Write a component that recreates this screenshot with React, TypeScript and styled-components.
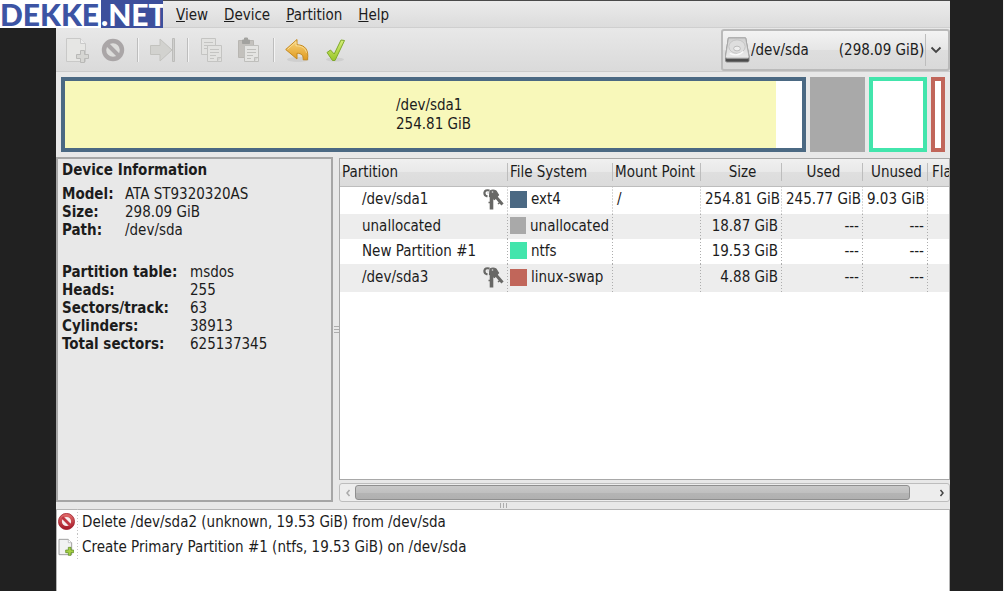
import React from "react";
import styled, { createGlobalStyle } from "styled-components";

const Global = createGlobalStyle`
  * { box-sizing: border-box; }
  html, body, #root { height: 100%; }
  body {
    margin: 0;
    background: #212121;
    color: #1c1c1c;
    font: 15px/18px "DejaVu Sans Condensed", "DejaVu Sans", sans-serif;
  }
  button, select { font: inherit; color: inherit; }
`;

const Page = styled.div`
  display: flex;
  flex-direction: column;
  min-height: 100%;
  border-right: 1px solid #f4f4f4;
`;

const Header = styled.header`
  display: flex;
  height: 28px;
  padding-right: 53px;
`;

const Logo = styled.a`
  display: flex;
  width: 163px;
  background: #fff;
  color: #3c54a4;
  font: 900 30px/28px Lato, sans-serif;
  text-decoration: none;
`;

const LogoName = styled.span`
  flex: 1;
`;

const LogoSuffix = styled.span`
  width: 62px;
  background: #3c4f9c;
  color: #fff;
`;

const MenuBar = styled.nav`
  flex: 1;
  display: flex;
  padding-left: 5px;
  border-top: 1px solid #4a4a4a;
  border-bottom: 1px solid #cfcfcf;
  background: linear-gradient(#ebebeb, #dcdcdc);
`;

const MenuButton = styled.button`
  border: 0;
  padding: 2px 8px 0;
  background: none;

  &::first-letter { text-decoration: underline; }
`;

const Main = styled.main`
  flex: 1;
  display: flex;
  flex-direction: column;
  margin: 0 53px 0 56px;
  background: #e8e8e8;
`;

const Toolbar = styled.div`
  display: flex;
  align-items: center;
  gap: 12px;
  height: 44px;
  padding-left: 9px;
  border-bottom: 1px solid #cbcbcb;
  background: linear-gradient(#e8e8e8, #dadada);
`;

const ToolButton = styled.button`
  width: 24px;
  height: 28px;
  padding: 0;
  border: 0;
  background: none;

  svg { display: block; overflow: visible; }
`;

const Separator = styled.span`
  width: 2px;
  height: 24px;
  border-left: 1px solid #bdbdbd;
  border-right: 1px solid #f4f4f4;
`;

const DevicePicker = styled.label`
  display: flex;
  align-items: center;
  width: 229px;
  height: 42px;
  margin-left: auto;
  padding-left: 2px;
  border: 2px solid #bababa;
  border-radius: 3px;
  background: linear-gradient(#f3f3f3, #e6e6e6 50%, #dedede 50%, #d9d9d9);
`;

const DeviceSelect = styled.select`
  flex: 1;
  min-width: 0;
  height: 32px;
  padding: 0 0 0 1px;
  border: 0;
  border-right: 1px solid #bdbdbd;
  background: none;
  appearance: none;
`;

const Chevron = styled.svg`
  width: 12px;
  height: 12px;
  margin: 0 6px 0 4px;
`;

const DiskMap = styled.section`
  display: flex;
  gap: 4px;
  height: 85px;
  padding: 5px;
`;

const Segment = styled.div<{ $share: number; $color: string; $solid?: boolean }>`
  position: relative;
  display: flex;
  align-items: center;
  justify-content: center;
  flex: ${(p) => p.$share} 1 0;
  border: 4px solid ${(p) => p.$color};
  background: ${(p) => (p.$solid ? p.$color : "#fff")};
`;

const UsedFill = styled.div`
  position: absolute;
  inset: 0 auto 0 0;
  background: #f8f8ba;
`;

const SegmentLabel = styled.div`
  position: relative;
  line-height: 19px;
`;

const Panes = styled.div`
  display: flex;
  height: 345px;
`;

const InfoPanel = styled.aside`
  width: 277px;
  padding: 2px 4px;
  border: 2px solid #a6a6a6;
`;

const InfoTitle = styled.h2`
  margin: 0 0 6px;
  font-size: 15px;
  line-height: 18px;
`;

const InfoList = styled.dl<{ $labels: number }>`
  display: grid;
  grid-template-columns: ${(p) => p.$labels}px 1fr;
  margin: 0 0 24px;

  dt { font-weight: bold; white-space: nowrap; }
  dd { margin: 0; }
`;

const Grip = styled.div<{ $vertical?: boolean }>`
  display: flex;
  flex-direction: ${(p) => (p.$vertical ? "column" : "row")};
  align-items: center;
  justify-content: center;
  gap: 2px;
  ${(p) => (p.$vertical ? "width: 6px;" : "height: 7px;")}

  i {
    width: ${(p) => (p.$vertical ? 5 : 1)}px;
    height: ${(p) => (p.$vertical ? 1 : 5)}px;
    background: #adadad;
  }
`;

const TablePane = styled.div`
  flex: 1;
  min-width: 0;
  display: flex;
  flex-direction: column;
  gap: 3px;
`;

const TableFrame = styled.div`
  flex: 1;
  margin-top: 1px;
  overflow: hidden;
  border: 1px solid #a8a8a8;
  background: #fff;
`;

const Table = styled.table`
  width: 100%;
  table-layout: fixed;
  border-collapse: collapse;
  white-space: nowrap;
`;

const HeadCell = styled.th<{ $align?: string }>`
  height: 27px;
  padding: 0 0 0 2px;
  font-weight: normal;
  text-align: ${(p) => p.$align || "left"};
  border-bottom: 1px solid #bdbdbd;
  background:
    linear-gradient(#bdbdbd, #bdbdbd) right / 1px 18px no-repeat,
    linear-gradient(#f0f0f0, #e8e8e8 50%, #dfdfdf 50%, #dbdbdb);

  &:last-child {
    padding-left: 4px;
    background: linear-gradient(#f0f0f0, #e8e8e8 50%, #dfdfdf 50%, #dbdbdb);
  }
`;

const Row = styled.tr<{ $tall: boolean }>`
  height: ${(p) => (p.$tall ? 28 : 25)}px;

  &:nth-child(even) { background: #ededed; }
`;

const Cell = styled.td<{ $right?: boolean }>`
  padding: 0 4px 2px;
  text-align: ${(p) => (p.$right ? "right" : "left")};
  background: linear-gradient(#adadad 1px, transparent 1px) right top / 1px 3px repeat-y;

  &:last-child { background: none; }
`;

const NameCell = styled.div`
  display: flex;
  align-items: center;
  justify-content: space-between;
  padding-left: 18px;
`;

const FsCell = styled.div`
  display: flex;
  align-items: center;
  gap: 4px;
  margin-left: -2px;
`;

const Swatch = styled.span<{ $color: string }>`
  width: 17px;
  height: 17px;
  background: ${(p) => p.$color};
`;

const ScrollBar = styled.div`
  display: flex;
  height: 19px;
  border: 1px solid #bdbdbd;
  border-radius: 3px;
  background: #ededed;
`;

const ScrollButton = styled.button`
  width: 15px;
  padding: 0;
  border: 0;
  background: none;

  svg { display: block; margin: 0 auto; }
`;

const Track = styled.div`
  flex: 1;
  margin-right: 7px;
`;

const Thumb = styled.div`
  width: 97%;
  height: 15px;
  margin-top: 1px;
  border: 1px solid #8f8f8f;
  border-radius: 3px;
  background: linear-gradient(#c9c9c9, #c0c0c0 50%, #b5b5b5 50%, #b0b0b0);
`;

const Operations = styled.ul`
  flex: 1;
  margin: 0;
  padding: 0 0 0 1px;
  border: 1px solid #b5b5b5;
  border-bottom: 0;
  background: #fff;
  list-style: none;
`;

const Operation = styled.li`
  display: flex;
  align-items: center;
  height: 25px;
  padding-bottom: 2px;
`;

const OperationIcon = styled.span`
  display: flex;
  align-items: center;
  width: 20px;
  height: 25px;
  margin-right: 4px;
  background: linear-gradient(#c4c4c4 1px, transparent 1px) right top / 1px 3px repeat-y;
`;

const NewIcon = ({ active, size = 24 }: { active?: boolean; size?: number }) => (
  <svg width={size} height={size + 2} viewBox="0 0 24 26">
    <path d="M1.5 1.5h14l5 5v18h-19z" fill={active ? "#f2f2f2" : "#e6e6e4"} stroke={active ? "#999" : "#c9c9c8"} strokeWidth={active ? 1.4 : 1} />
    <path d="M15.500 1.500v5h5" fill={active ? "#fff" : "#ededed"} stroke={active ? "#aaa" : "#cacaca"} />
    <path d="M15.500 13.500h4v4h4v4h-4v4h-4v-4h-4v-4h4z" fill={active ? "#a5cf45" : "#d6d6d3"} stroke={active ? "#55851a" : "#b9b9b7"} strokeLinejoin="round" />
  </svg>
);

const ForbidIcon = ({ active, size = 24 }: { active?: boolean; size?: number }) => (
  <svg width={size} height={size} viewBox="0 0 24 24">
    <defs>
      <linearGradient id="forbidRed" x2="0" y2="1">
        <stop stopColor="#df6868" />
        <stop offset="1" stopColor="#a81f2c" />
      </linearGradient>
    </defs>
    <circle cx="12" cy="12" r="9" fill={active ? "#f6eeee" : "#dddddb"} stroke={active ? "url(#forbidRed)" : "#aaa6a7"} strokeWidth={active ? 5 : 4.400} />
    <path d="M6 6l12 12" stroke={active ? "#bf3540" : "#aaa6a7"} strokeWidth="4" />
    {active && <circle cx="12" cy="12" r="11.400" fill="none" stroke="#9c1a28" strokeWidth="1" />}
  </svg>
);

const ApplyArrowIcon = () => (
  <svg width="24" height="26" viewBox="0 0 24 26">
    <path d="M-.5 8.500h9.500v-6.500l12 11-12 11v-6.500h-9.500z" fill="#d2d2cf" stroke="#c2c2be" strokeLinejoin="round" />
    <path d="M21.500 1.500h2v23h-2z" fill="#d0d0ce" stroke="#bcbcba" />
  </svg>
);

const CopyIcon = () => (
  <svg width="24" height="26" viewBox="0 0 24 26">
    <g fill="#e2e2e0" stroke="#c4c4c2">
      <path d="M.5 1.500h14v16h-14z" />
      <path d="M3 5.500h9M3 8.500h9M3 11.500h5" />
      <path d="M6.500 8.500h14v16h-14z" />
      <path d="M9 12.500h9M9 15.500h9M9 18.500h6M9 21.500h4" />
      <path d="M16.500 24.500v-4h4" fill="#d2d2d0" />
    </g>
  </svg>
);

const PasteIcon = () => (
  <svg width="24" height="26" viewBox="0 0 24 26">
    <path d="M1.500 3.500h15v17h-15z" fill="#c3c1bd" stroke="#b8b6b2" />
    <path d="M5.500 6.500v-3.500h2v-2h3v2h2v3.500z" fill="#a2a29f" stroke="#a2a29f" />
    <g fill="#e4e4e2" stroke="#bfbfbc">
      <path d="M7.500 8.500h14v16h-14z" />
      <path d="M10 12.500h9M10 15.500h9M10 18.500h6M10 21.500h4" />
      <path d="M17.500 24.500v-4h4" fill="#d2d2d0" />
    </g>
  </svg>
);

const UndoIcon = () => (
  <svg width="24" height="26" viewBox="0 0 24 26">
    <defs>
      <linearGradient id="undoGold" x2="0" y2="1">
        <stop stopColor="#f8d57c" />
        <stop offset="1" stopColor="#e09a20" />
      </linearGradient>
    </defs>
    <ellipse cx="11" cy="22.500" rx="11" ry="2.500" fill="#cfcfcf" />
    <path d="M-1.300 12.500L10 2.500v5.300c8 0 12 5 10.500 15h-4.300c.2-4.500-1.500-6.500-6.200-6.500v5.700z" fill="url(#undoGold)" stroke="#c58a20" strokeLinejoin="round" />
    <path d="M.5 12.300L9 4.700V8.800c6 0 9.600 2.500 10.500 7" fill="none" stroke="#fbe3a4" strokeWidth=".8" />
  </svg>
);

const CheckIcon = () => (
  <svg width="24" height="26" viewBox="0 0 24 26">
    <defs>
      <linearGradient id="checkGreen" x2="0" y2="1">
        <stop stopColor="#d5ee78" />
        <stop offset="1" stopColor="#9ac62a" />
      </linearGradient>
    </defs>
    <ellipse cx="12" cy="22.500" rx="9" ry="2" fill="#cfcfcf" />
    <path d="M4 15.500l3.500-2.500 3.700 4L18 3l3.500.5-9.500 20h-2.500z" fill="url(#checkGreen)" stroke="#7fa92a" strokeLinejoin="round" />
  </svg>
);

const DriveIcon = () => (
  <svg width="25" height="27" viewBox="0 0 26 28">
    <defs>
      <linearGradient id="driveTop" x2="0" y2="1">
        <stop stopColor="#d0d0d0" />
        <stop offset="1" stopColor="#eaeaea" />
      </linearGradient>
      <linearGradient id="driveSide" x2="0" y2="1">
        <stop stopColor="#aaa" />
        <stop offset="1" stopColor="#444" />
      </linearGradient>
    </defs>
    <path d="M3.500 2h18l3.500 19v4.500q0 1.500-1.500 1.500h-21.500q-1.500 0-1.500-1.500V21z" fill="url(#driveSide)" stroke="#888" />
    <path d="M3.500 2h18L25 21.500q0 1.500-1.500 1.500h-21.500q-1.500 0-1.500-1.500z" fill="url(#driveTop)" stroke="#aaa" />
    <ellipse cx="12.500" cy="11" rx="8.500" ry="7" fill="#dedede" stroke="#c4c4c4" />
    <ellipse cx="12.500" cy="13" rx="3.500" ry="2.500" fill="#eee" stroke="#b9b9b9" />
    <path d="M5 18q8 4 14-2" fill="none" stroke="#fafafa" strokeWidth="1.500" />
  </svg>
);

const KeysIcon = () => (
  <svg width="21" height="21" viewBox="0 0 21 21">
    <g fill="#686866" stroke="#686866">
      <path d="M6.500 1.500Q2 .5 1.500 3.500T4.500 7.500" fill="none" strokeWidth="2.200" />
      <path d="M7 2q3-2 6 0l2.500 4-4 4.500-5-3z" strokeWidth="1.200" />
      <path d="M13 8l6.500 7.500" strokeWidth="3" />
      <path d="M8.500 7v13.500" strokeWidth="3.600" />
      <path d="M5.500 13.500h3M15 15l3-2.500" strokeWidth="1.500" />
    </g>
    <circle cx="5" cy="4" r="1" fill="#ddd" />
    <circle cx="9.500" cy="3" r=".8" fill="#ddd" />
  </svg>
);

const tools: (null | [string, React.ReactNode, boolean?])[] = [
  ["New partition", <NewIcon />, true],
  ["Delete partition", <ForbidIcon />, true],
  null,
  ["Resize or move partition", <ApplyArrowIcon />, true],
  null,
  ["Copy partition", <CopyIcon />, true],
  ["Paste partition", <PasteIcon />, true],
  null,
  ["Undo last operation", <UndoIcon />],
  ["Apply all operations", <CheckIcon />],
];

const colors = { ext4: "#4b6983", none: "#a9a9a9", ntfs: "#42e5ac", swap: "#c1665a" };

const partitions = [
  { name: "/dev/sda1", locked: true, fs: "ext4", color: colors.ext4, mount: "/", size: "254.81 GiB", used: "245.77 GiB", unused: "9.03 GiB" },
  { name: "unallocated", locked: false, fs: "unallocated", color: colors.none, mount: "", size: "18.87 GiB", used: "---", unused: "---" },
  { name: "New Partition #1", locked: false, fs: "ntfs", color: colors.ntfs, mount: "", size: "19.53 GiB", used: "---", unused: "---" },
  { name: "/dev/sda3", locked: true, fs: "linux-swap", color: colors.swap, mount: "", size: "4.88 GiB", used: "---", unused: "---" },
];

const general = [
  ["Model:", "ATA ST9320320AS"],
  ["Size:", "298.09 GiB"],
  ["Path:", "/dev/sda"],
];

const geometry = [
  ["Partition table:", "msdos"],
  ["Heads:", "255"],
  ["Sectors/track:", "63"],
  ["Cylinders:", "38913"],
  ["Total sectors:", "625137345"],
];

const Info = ({ items, labels }: { items: string[][]; labels: number }) => (
  <InfoList $labels={labels}>
    {items.map(([term, value]) => (
      <React.Fragment key={term}>
        <dt>{term}</dt>
        <dd>{value}</dd>
      </React.Fragment>
    ))}
  </InfoList>
);

export default function App() {
  return (
    <Page>
      <Global />
      <Header>
        <Logo href="#">
          <LogoName>DEKKE</LogoName>
          <LogoSuffix>.NET</LogoSuffix>
        </Logo>
        <MenuBar>
          {["View", "Device", "Partition", "Help"].map((name) => (
            <MenuButton key={name}>{name}</MenuButton>
          ))}
        </MenuBar>
      </Header>
      <Main>
        <Toolbar>
          {tools.map((tool, i) =>
            tool ? (
              <ToolButton key={i} aria-label={tool[0]} disabled={tool[2]}>{tool[1]}</ToolButton>
            ) : (
              <Separator key={i} />
            )
          )}
          <DevicePicker>
            <DriveIcon />
            <DeviceSelect aria-label="Device">
              <option>{"/dev/sda" + "\u00a0".repeat(7) + "(298.09 GiB)"}</option>
            </DeviceSelect>
            <Chevron viewBox="0 0 12 12">
              <path d="M1.500 3.500L6 8l4.500-4.500" fill="none" stroke="#444" strokeWidth="1.800" />
            </Chevron>
          </DevicePicker>
        </Toolbar>

        <DiskMap>
          <Segment $share={737} $color={colors.ext4}>
            <UsedFill style={{ width: `${(245.77 / 254.81) * 100}%` }} />
            <SegmentLabel>/dev/sda1<br />254.81 GiB</SegmentLabel>
          </Segment>
          <Segment $share={47} $color={colors.none} $solid />
          <Segment $share={50} $color={colors.ntfs} />
          <Segment $share={6} $color={colors.swap} />
        </DiskMap>

        <Panes>
          <InfoPanel>
            <InfoTitle>Device Information</InfoTitle>
            <Info items={general} labels={63} />
            <Info items={geometry} labels={128} />
          </InfoPanel>
          <Grip $vertical><i /><i /><i /></Grip>
          <TablePane>
            <TableFrame>
              <Table>
                <colgroup>
                  {[168, 105, 88, 81, 81, 65].map((w, i) => (
                    <col key={i} width={w} />
                  ))}
                  <col />
                </colgroup>
                <thead>
                  <tr>
                    <HeadCell>Partition</HeadCell>
                    <HeadCell>File System</HeadCell>
                    <HeadCell>Mount Point</HeadCell>
                    <HeadCell $align="center">Size</HeadCell>
                    <HeadCell $align="center">Used</HeadCell>
                    <HeadCell $align="center">Unused</HeadCell>
                    <HeadCell>Flags</HeadCell>
                  </tr>
                </thead>
                <tbody>
                  {partitions.map((p) => (
                    <Row key={p.name} $tall={p.locked}>
                      <Cell><NameCell>{p.name}{p.locked && <KeysIcon />}</NameCell></Cell>
                      <Cell><FsCell><Swatch $color={p.color} />{p.fs}</FsCell></Cell>
                      <Cell>{p.mount}</Cell>
                      <Cell $right>{p.size}</Cell>
                      <Cell $right>{p.used}</Cell>
                      <Cell $right>{p.unused}</Cell>
                      <Cell />
                    </Row>
                  ))}
                </tbody>
              </Table>
            </TableFrame>
            <ScrollBar>
              <ScrollButton aria-label="Scroll left" disabled>
                <svg width="6" height="10" viewBox="0 0 6 10"><path d="M4.500 2L2 5l2.500 3" fill="none" stroke="#aaa" strokeWidth="1.500" /></svg>
              </ScrollButton>
              <Track><Thumb /></Track>
              <ScrollButton aria-label="Scroll right">
                <svg width="6" height="10" viewBox="0 0 6 10"><path d="M1.500 2L4 5 1.500 8" fill="none" stroke="#444" strokeWidth="1.500" /></svg>
              </ScrollButton>
            </ScrollBar>
          </TablePane>
        </Panes>
        <Grip><i /><i /><i /></Grip>
        <Operations>
          <Operation>
            <OperationIcon><ForbidIcon active size={17} /></OperationIcon>
            Delete /dev/sda2 (unknown, 19.53 GiB) from /dev/sda
          </Operation>
          <Operation>
            <OperationIcon><NewIcon active size={16} /></OperationIcon>
            Create Primary Partition #1 (ntfs, 19.53 GiB) on /dev/sda
          </Operation>
        </Operations>
      </Main>
    </Page>
  );
}
